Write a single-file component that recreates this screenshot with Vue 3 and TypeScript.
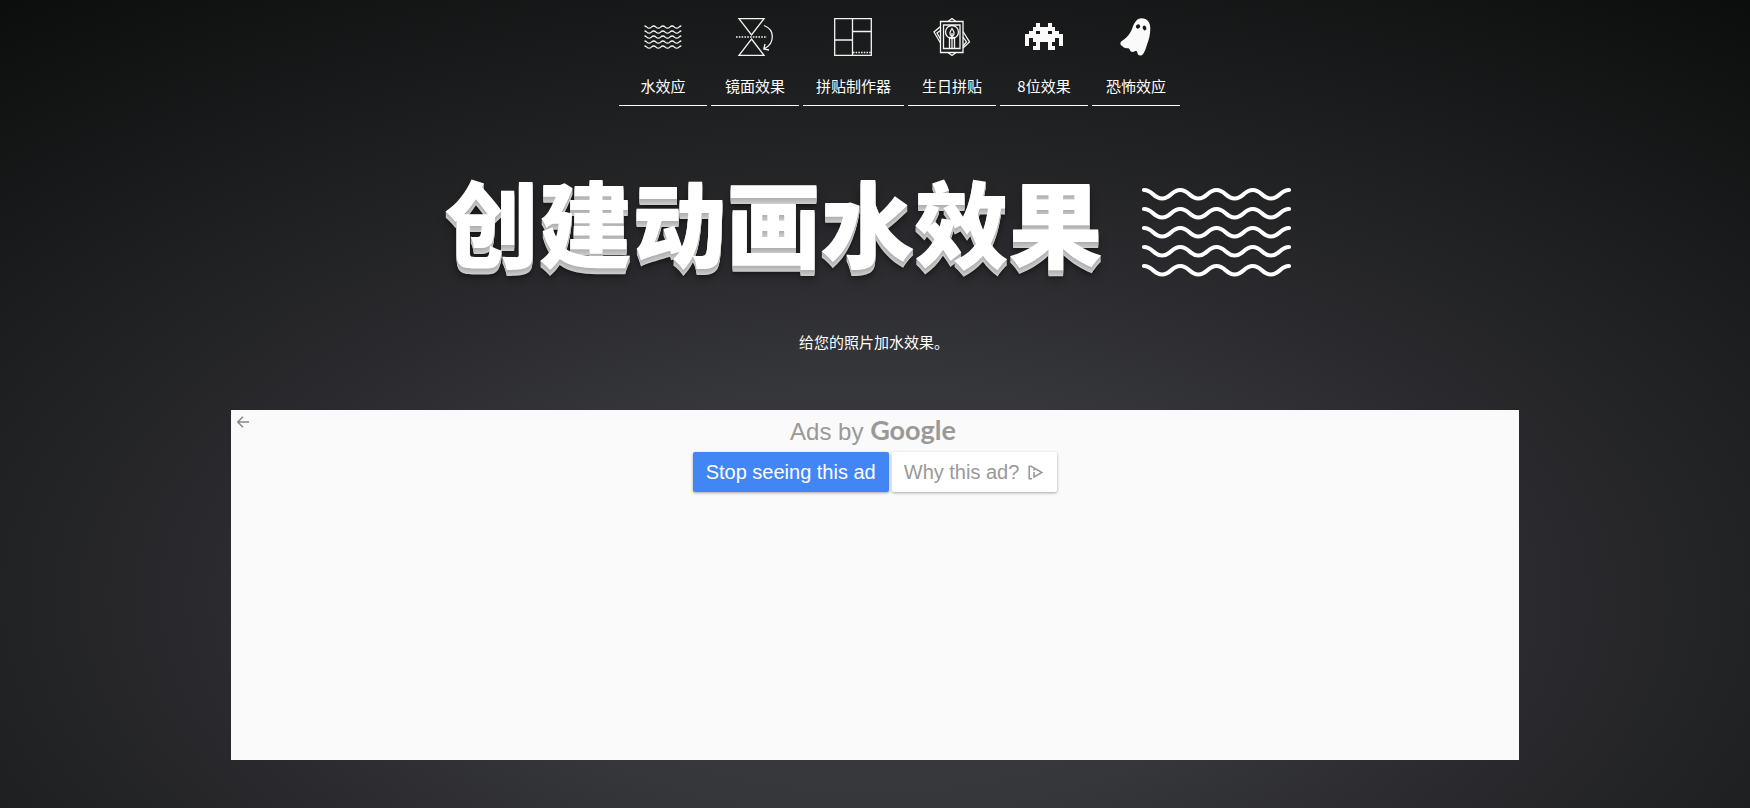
<script setup lang="ts">
interface NavItem {
  id: string
  label: string
}

const items: NavItem[] = [
  { id: 'water', label: '水效应' },
  { id: 'mirror', label: '镜面效果' },
  { id: 'collage', label: '拼贴制作器' },
  { id: 'birthday', label: '生日拼贴' },
  { id: 'eightbit', label: '8位效果' },
  { id: 'scary', label: '恐怖效应' },
]

// Builds a horizontal wave that starts and ends on a crest.
function wave(x: number, y: number, period: number, depth: number, count: number): string {
  const half = period / 2
  const c = half / 2
  let d = `M${x} ${y}`
  for (let i = 0; i < count; i++) {
    d += `c${c} 0 ${half - c} ${depth} ${half} ${depth}s${half - c} ${-depth} ${half} ${-depth}`
  }
  return d
}

const smallWaves = [8, 13, 18, 23, 28].map((y) => wave(0.5, y, 9.2, 2.2, 4))
const largeWaves = [3, 22, 41, 60, 79].map((y) => wave(3, y, 36.25, 8.5, 4))

const invaderRows = [
  '...x..x...',
  '..xxxxxx..',
  '.xx.xx.xx.',
  'xxxxxxxxxx',
  'x.xxxxxx.x',
  'x..x..x..x',
  '..xx..xx..',
]

// One square per filled cell of the invader bitmap.
const invaderPath = invaderRows
  .map((row, y) => [...row].map((cell, x) => (cell === 'x' ? `M${x} ${y}h1v1h-1z` : '')).join(''))
  .join('')
</script>

<template>
  <div class="page">
    <nav class="nav">
      <a v-for="item in items" :key="item.id" class="nav-item" href="#">
        <svg class="nav-icon" viewBox="0 0 38 38" aria-hidden="true">
          <g v-if="item.id === 'water'" class="line">
            <path v-for="d in smallWaves" :key="d" :d="d" />
          </g>
          <g v-else-if="item.id === 'mirror'" class="line">
            <path d="M3 .7h25L15.5 17zM15.5 21 28 37.3H3z" />
            <path d="M0 19h31" stroke-dasharray="1.6 1.2" />
            <path d="M28 7.5c11 4 11 18 .5 23M29 26l-1.200 5 5.200 1" />
          </g>
          <g v-else-if="item.id === 'collage'" class="line">
            <path d="M.7.7h36.6v36.6H.7zM18.5.7v36.6M18.5 13.5h18.8M.7 22h17.8" />
            <path d="M19 34.5h18" stroke-dasharray="1.5 1.2" />
          </g>
          <g v-else-if="item.id === 'birthday'" class="line">
            <path d="M7.5 3.5H30v31H7.5zM10.5 7H27v23.500H10.5z" />
            <path d="m15 3.5 4-3 4 3M15 34.5l4 3 4-3M7.5 8.5 1 14l6.500 11M7.5 12.5 4 15l3.500 6M30 13.5 36.500 24 30 30M30 19l3.500 5-3.500 4" />
            <path d="M16.500 30.500V19.500h5v11M19 18.500c-3.500-2-2-5 0-8 2 3 3.500 6 0 8zM19 15v15.500" />
            <circle cx="19" cy="14" r="6.5" />
          </g>
          <path
            v-else-if="item.id === 'eightbit'"
            class="solid"
            shape-rendering="crispEdges"
            transform="translate(0 5) scale(3.8)"
            :d="invaderPath"
          />
          <g v-else class="solid">
            <path d="M15.300 10.300C17.500 4 20 .2 24.500.2c6 0 9 4.500 8.800 10.600-.1 6-1.300 10.700-3 14.900-1.800 6-3.500 11-6.200 11.800-2.600.5-3.300-1-3.800-3-.6-1.700-1-1.700-2.500-1.200-2.200 1.200-4 .9-4.800-1-.5-1.700-1-2.400-2.700-2.100-2.500.2-4-.7-5-2.200-2.300-1-2.600-3-.8-4.800 5-3.500 8-5.700 10.800-12.900z" />
            <ellipse class="eye" cx="21" cy="8.5" rx="2.2" ry="2" transform="rotate(-30 21 8.5)" />
            <ellipse class="eye" cx="27.5" cy="10" rx="1.8" ry="2.4" transform="rotate(-20 27.5 10)" />
          </g>
        </svg>
        <span class="nav-label">{{ item.label }}</span>
      </a>
    </nav>

    <header class="hero">
      <h1 class="title">创建动画水效果</h1>
      <svg class="hero-waves" viewBox="0 0 151 91" aria-hidden="true">
        <path v-for="d in largeWaves" :key="d" :d="d" />
      </svg>
    </header>

    <p class="lead">给您的照片加水效果。</p>

    <section class="ad" aria-label="Ads by Google">
      <button class="back" type="button" aria-label="Back">
        <svg viewBox="0 0 12 12" aria-hidden="true"><path d="M12 6H1M6 .8.8 6 6 11.2" /></svg>
      </button>
      <div class="ad-brand">Ads by <span class="google">Google</span></div>
      <div class="ad-actions">
        <button class="stop" type="button">Stop seeing this ad</button>
        <button class="why" type="button">
          Why this ad?
          <svg viewBox="0 0 15 15" aria-hidden="true">
            <path d="M4 13.8H1.2V1.2H3L14 7.5 6 12V7M6 4v1.5" />
          </svg>
        </button>
      </div>
    </section>
  </div>
</template>

<style>
body {
  margin: 0;
  background: #202122;
}
</style>

<style scoped>
.page {
  min-height: 100vh;
  box-sizing: border-box;
  overflow: hidden;
  background: radial-gradient(ellipse 1250px 660px at 50% 600px, #3c3d41 0%, #36373b 32%, #2a2a2e 54%, #202122 73%, #0a0b0b 118%);
  color: #fff;
  font-family: "Noto Sans CJK SC", "Liberation Sans", sans-serif;
}

.nav {
  display: flex;
  justify-content: center;
  gap: 4px;
  padding: 18px 0 0 49px;
}

.nav-item {
  display: flex;
  flex-direction: column;
  align-items: center;
  box-sizing: border-box;
  min-width: 88px;
  padding: 0 13px 9px;
  border-bottom: 1px solid #fff;
  color: #fff;
  font-size: 15px;
  line-height: 20px;
  text-decoration: none;
}

.nav-icon {
  width: 38px;
  height: 38px;
  margin-bottom: 20px;
}

.line {
  fill: none;
  stroke: #f4f4f4;
  stroke-width: 1.3;
}

.solid {
  fill: #fafafa;
}

.eye {
  fill: #18191a;
}

.hero {
  display: flex;
  justify-content: center;
  align-items: center;
  gap: 38px;
  height: 140px;
  margin-top: 56px;
  padding-right: 14px;
}

.title {
  margin: 0;
  padding-bottom: 24px;
  font-size: 94px;
  font-weight: 900;
  line-height: 116px;
  white-space: nowrap;
  text-shadow:
    0 1px 0 #b0b0b0,
    0 2px 0 #b5b5b5,
    0 3px 0 #bbb,
    0 4px 0 #c0c0c0,
    0 5px 0 #c6c6c6,
    0 6px 0 #ccc,
    0 7px 3px rgba(0, 0, 0, 0.3),
    0 9px 10px rgba(0, 0, 0, 0.35);
}

.hero-waves {
  width: 151px;
  height: 91px;
  fill: none;
  stroke: #fff;
  stroke-width: 4.2;
  stroke-linecap: round;
}

.lead {
  margin: 28px 0 56px;
  padding-right: 2px;
  font-size: 15px;
  line-height: 24px;
  text-align: center;
}

.ad {
  position: relative;
  box-sizing: border-box;
  width: 1288px;
  max-width: 100%;
  height: 350px;
  margin: 0 auto 48px;
  padding-top: 2px;
  background: #fafafa;
  color: #999;
  font-family: "Liberation Sans", Arial, sans-serif;
  text-align: center;
}

.back {
  position: absolute;
  top: 6px;
  left: 6px;
  display: flex;
  padding: 0;
  border: 0;
  background: none;
}

.back svg {
  width: 12px;
  height: 12px;
  fill: none;
  stroke: #888;
  stroke-width: 1.5;
}

.ad-brand {
  padding-right: 4px;
  font-size: 24px;
  line-height: 36px;
}

.google {
  font-family: "Lato", sans-serif;
  font-size: 27px;
  font-weight: 700;
}

.ad-actions {
  display: flex;
  justify-content: center;
  gap: 3px;
  margin-top: 2px;
}

.stop,
.why {
  display: flex;
  align-items: center;
  gap: 9px;
  height: 40px;
  padding: 0 13px;
  border: 0;
  border-radius: 2px;
  box-shadow: 0 1px 3px rgba(0, 0, 0, 0.35);
  font-family: inherit;
  font-size: 20px;
}

.stop {
  background: #4285f4;
  color: #fff;
}

.why {
  padding: 0 14px 0 12px;
  background: #fff;
  color: #999;
}

.why svg {
  width: 15px;
  height: 15px;
  fill: none;
  stroke: #999;
  stroke-width: 1.6;
}
</style>
